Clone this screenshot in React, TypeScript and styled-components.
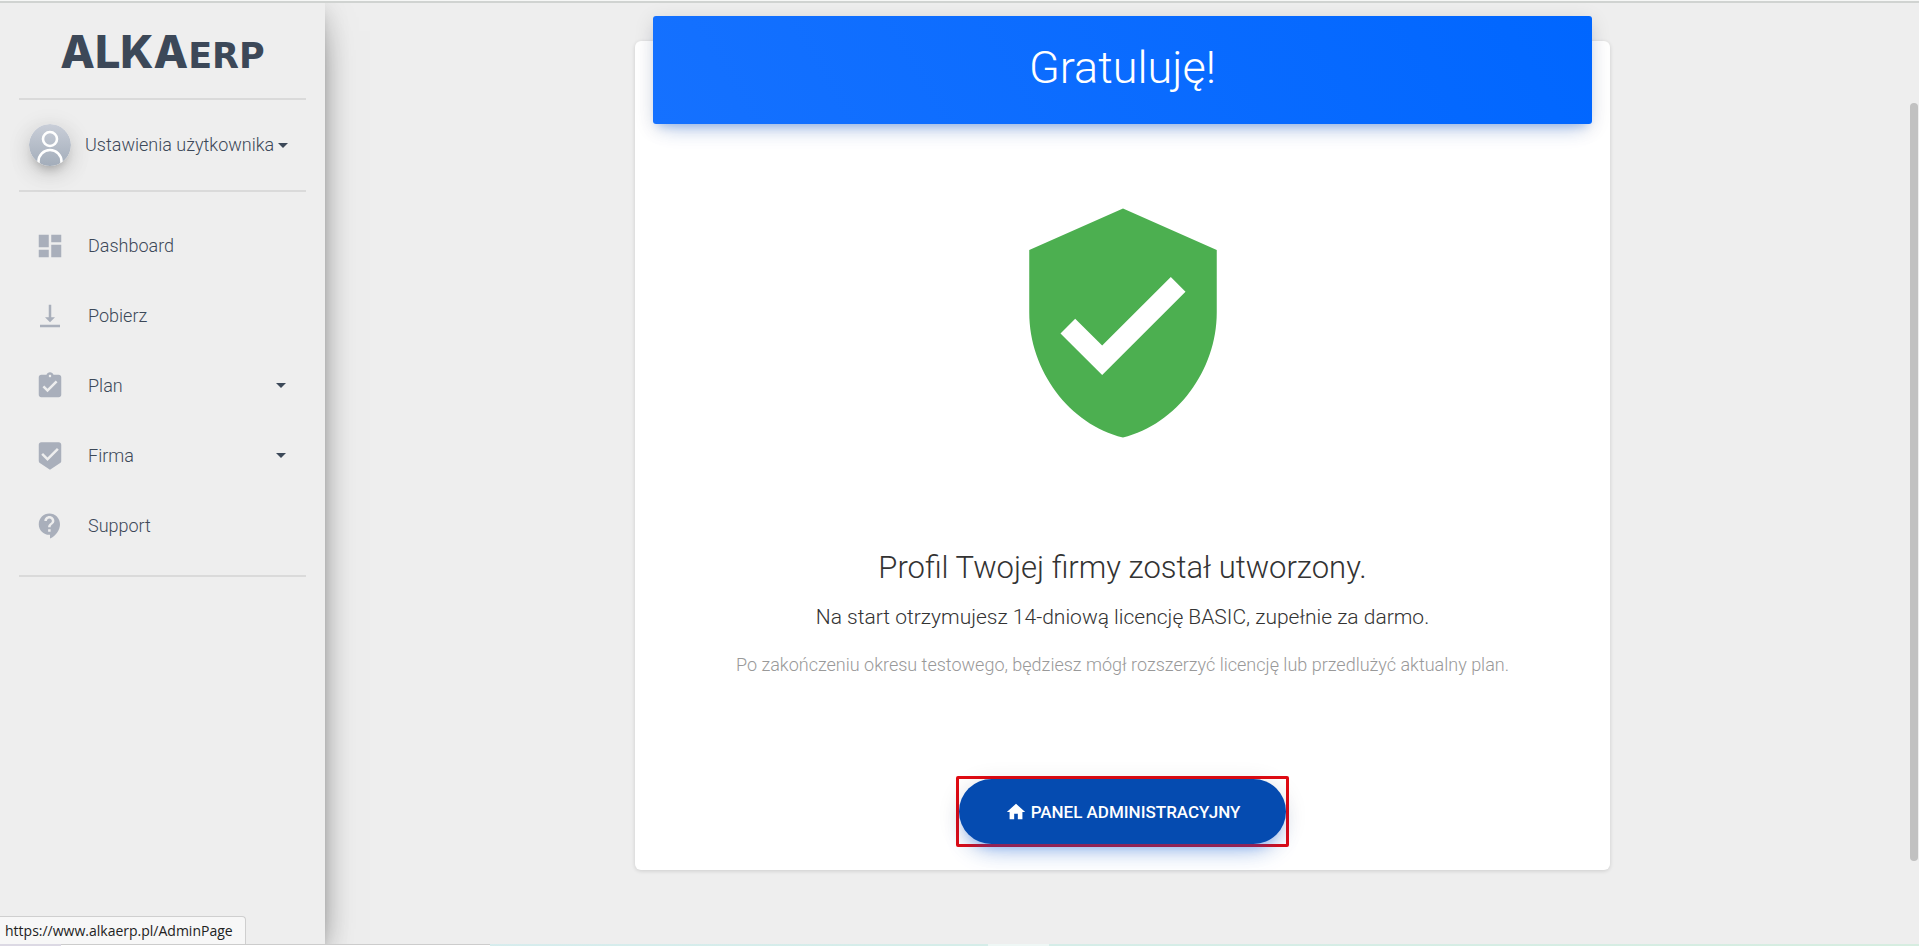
import React from "react";
import styled, { createGlobalStyle } from "styled-components";
import {
  MdAssignmentTurnedIn,
  MdBeenhere,
  MdContactSupport,
  MdDashboard,
  MdHome,
  MdVerifiedUser,
  MdVerticalAlignBottom,
} from "react-icons/md";

const GlobalStyle = createGlobalStyle`
  *, *::before, *::after { box-sizing: border-box; }
  body {
    margin: 0;
    background: #eeeeee;
    color: #3c4858;
    font-family: Roboto, "Liberation Sans", sans-serif;
    font-weight: 300;
  }
  h1, h2, p, ul { margin: 0; padding: 0; font-weight: 300; }
  ul { list-style: none; }
`;

const Page = styled.div`
  display: flex;
  flex-direction: column;
  min-height: 100vh;
  overflow: hidden;
`;

const TopEdge = styled.div`
  position: relative;
  z-index: 2;
  height: 3px;
  border-top: 1px solid #f6f7f6;
  border-bottom: 2px solid #d0d3d1;
`;

const Body = styled.div`
  display: flex;
  flex: 1;
`;

const Sidebar = styled.aside`
  position: relative;
  z-index: 1;
  flex: none;
  width: 325px;
  padding: 0 19px;
  background: #eeeeee;
  box-shadow:
    0 16px 38px -12px rgba(0, 0, 0, 0.56),
    0 4px 25px 0 rgba(0, 0, 0, 0.12),
    0 8px 10px -5px rgba(0, 0, 0, 0.2);
`;

const Logo = styled.a`
  display: flex;
  align-items: baseline;
  justify-content: center;
  height: 97px;
  padding-top: 19px;
  border-bottom: 2px solid #dadada;
  color: #3c4858;
  font: 800 45px/60px Inter, "Liberation Sans", sans-serif;
  text-decoration: none;
`;

const LogoSuffix = styled.span`
  font-family: "DejaVu Sans", sans-serif;
  font-size: 35px;
  font-weight: 700;
`;

const UserBox = styled.div`
  padding: 19px 0;
  border-bottom: 2px solid #dadada;
`;

const UserButton = styled.button`
  display: flex;
  align-items: center;
  width: 100%;
  height: 52px;
  padding: 0 18px 0 10px;
  border: 0;
  background: none;
  color: inherit;
  font: 300 18px/26px Roboto, sans-serif;
  white-space: nowrap;
`;

const Avatar = styled.svg`
  flex: none;
  width: 42px;
  height: 42px;
  margin-right: 14px;
  border-radius: 50%;
  box-shadow:
    0 10px 30px -12px rgba(0, 0, 0, 0.42),
    0 4px 25px 0 rgba(0, 0, 0, 0.12),
    0 8px 10px -5px rgba(0, 0, 0, 0.2);
`;

const Caret = styled.span`
  margin-left: auto;
  border-top: 5px solid #3c4858;
  border-right: 5px solid transparent;
  border-left: 5px solid transparent;
`;

const NavList = styled.ul`
  display: flex;
  flex-direction: column;
  gap: 15px;
  padding: 26px 0 22px;
  border-bottom: 2px solid #dadada;
`;

const NavLink = styled.a`
  display: flex;
  align-items: center;
  gap: 23px;
  height: 55px;
  padding: 0 20px 0 16px;
  color: #3c4858;
  font-size: 18px;
  line-height: 26px;
  text-decoration: none;

  svg {
    flex: none;
    width: 30px;
    height: 30px;
    color: #a9afbb;
  }
`;

const Main = styled.main`
  display: flex;
  flex: 1;
  align-items: flex-start;
  justify-content: center;
  padding: 38px 43px 72px 44px;
`;

const Card = styled.section`
  width: calc(100% * 8 / 12 - 30px);
  padding: 0 18px 23px;
  border-radius: 6px;
  background: #ffffff;
  box-shadow: 0 1px 4px 0 rgba(0, 0, 0, 0.14);
`;

const CardHeader = styled.header`
  margin-top: -25px;
  padding: 25px 15px 29px;
  border-radius: 3px;
  background: linear-gradient(60deg, #1571ff, #0066ff);
  box-shadow:
    0 12px 20px -10px rgba(0, 102, 255, 0.28),
    0 4px 20px 0 rgba(0, 0, 0, 0.12),
    0 7px 8px -5px rgba(0, 84, 210, 0.2);
  color: #ffffff;
  text-align: center;
`;

const Title = styled.h1`
  font-size: 45px;
  line-height: 54px;
`;

const CardBody = styled.div`
  display: flex;
  flex-direction: column;
  align-items: center;
  padding-top: 74px;
  text-align: center;
`;

const Shield = styled(MdVerifiedUser)`
  width: 250px;
  height: 250px;
  margin-bottom: 99px;
  color: #4caf50;
`;

const Headline = styled.h2`
  margin-bottom: 14px;
  color: #333333;
  font-size: 31px;
  line-height: 42px;
`;

const Lead = styled.p`
  margin-bottom: 21px;
  color: #333333;
  font-size: 21px;
  line-height: 28px;
`;

const Note = styled.p`
  margin-bottom: 98px;
  color: #999999;
  font-size: 18px;
  line-height: 26px;
`;

const Highlight = styled.div`
  border: 3px solid #e00b13;
  border-radius: 2px;
`;

const PrimaryButton = styled.button`
  display: flex;
  align-items: center;
  justify-content: center;
  gap: 4px;
  height: 65px;
  padding: 0 46px;
  border: 0;
  border-radius: 33px;
  background: #054bb0;
  box-shadow:
    0 14px 26px -12px rgba(0, 102, 255, 0.42),
    0 4px 23px 0 rgba(0, 0, 0, 0.12),
    0 8px 10px -5px rgba(0, 102, 255, 0.2);
  color: #ffffff;
  font: 500 17px/26px Roboto, sans-serif;
  text-transform: uppercase;

  svg {
    width: 22px;
    height: 22px;
  }
`;

const ScrollThumb = styled.div`
  position: fixed;
  top: 103px;
  right: 1px;
  bottom: 85px;
  width: 8px;
  border-radius: 4px;
  background: #c1c1c1;
`;

const LinkStatus = styled.div`
  position: fixed;
  z-index: 3;
  bottom: 2px;
  left: 0;
  height: 28px;
  padding: 0 12px 0 5px;
  border-top: 1px solid #cfcfcf;
  border-right: 1px solid #cfcfcf;
  border-top-right-radius: 4px;
  background: #f7f7f7;
  color: #222222;
  font: 400 14px/27px "Open Sans", "Noto Sans", sans-serif;
`;

const BottomEdge = styled.div`
  position: relative;
  z-index: 2;
  display: flex;
  height: 2px;
  background: linear-gradient(90deg, #d8ecf2, #d5ede9 50%, #d6ede0);
`;

const EdgeSegment = styled.div<{ $width: number; $color: string; $line?: boolean }>`
  width: ${(p) => p.$width}px;
  border-top: ${(p) => (p.$line ? "1px solid #cccccc" : "0")};
  background: ${(p) => p.$color};
`;

const EdgeSpace = styled.div`
  width: 498px;
`;

const navItems = [
  { label: "Dashboard", icon: MdDashboard },
  { label: "Pobierz", icon: MdVerticalAlignBottom },
  { label: "Plan", icon: MdAssignmentTurnedIn, expandable: true },
  { label: "Firma", icon: MdBeenhere, expandable: true },
  { label: "Support", icon: MdContactSupport },
];

export default function App() {
  return (
    <>
      <GlobalStyle />
      <Page>
        <TopEdge />
        <Body>
          <Sidebar>
            <Logo href="#">
              <span>ALKA</span>
              <LogoSuffix>ERP</LogoSuffix>
            </Logo>
            <UserBox>
              <UserButton type="button">
                <Avatar viewBox="0 0 42 42" aria-hidden="true">
                  <defs>
                    <linearGradient id="avatar" x1="0" y1="0" x2="0" y2="1">
                      <stop offset="0" stopColor="#c9ced8" />
                      <stop offset="1" stopColor="#a3adba" />
                    </linearGradient>
                  </defs>
                  <circle cx="21" cy="21" r="21" fill="url(#avatar)" />
                  <g fill="none" stroke="#ffffff" strokeWidth="2.6">
                    <circle cx="21" cy="15" r="7" />
                    <path d="M9.5 39v-1.500a11.500 11.500 0 0 1 23 0V39" />
                  </g>
                </Avatar>
                <span>Ustawienia użytkownika</span>
                <Caret />
              </UserButton>
            </UserBox>
            <nav>
              <NavList>
                {navItems.map(({ label, icon: Icon, expandable }) => (
                  <li key={label}>
                    <NavLink href="#">
                      <Icon aria-hidden="true" />
                      <span>{label}</span>
                      {expandable && <Caret />}
                    </NavLink>
                  </li>
                ))}
              </NavList>
            </nav>
          </Sidebar>
          <Main>
            <Card>
              <CardHeader>
                <Title>Gratuluję!</Title>
              </CardHeader>
              <CardBody>
                <Shield aria-hidden="true" />
                <Headline>Profil Twojej firmy został utworzony.</Headline>
                <Lead>Na start otrzymujesz 14-dniową licencję BASIC, zupełnie za darmo.</Lead>
                <Note>
                  Po zakończeniu okresu testowego, będziesz mógł rozszerzyć licencję lub przedlużyć
                  aktualny plan.
                </Note>
                <Highlight>
                  <PrimaryButton type="button">
                    <MdHome aria-hidden="true" />
                    Panel administracyjny
                  </PrimaryButton>
                </Highlight>
              </CardBody>
            </Card>
          </Main>
        </Body>
        <BottomEdge>
          <EdgeSegment $width={61} $color="#dcd9e4" />
          <EdgeSegment $width={429} $color="#ffffff" $line />
          <EdgeSpace />
          <EdgeSegment $width={61} $color="#eef7f5" />
        </BottomEdge>
        <ScrollThumb />
        <LinkStatus>https://www.alkaerp.pl/AdminPage</LinkStatus>
      </Page>
    </>
  );
}
